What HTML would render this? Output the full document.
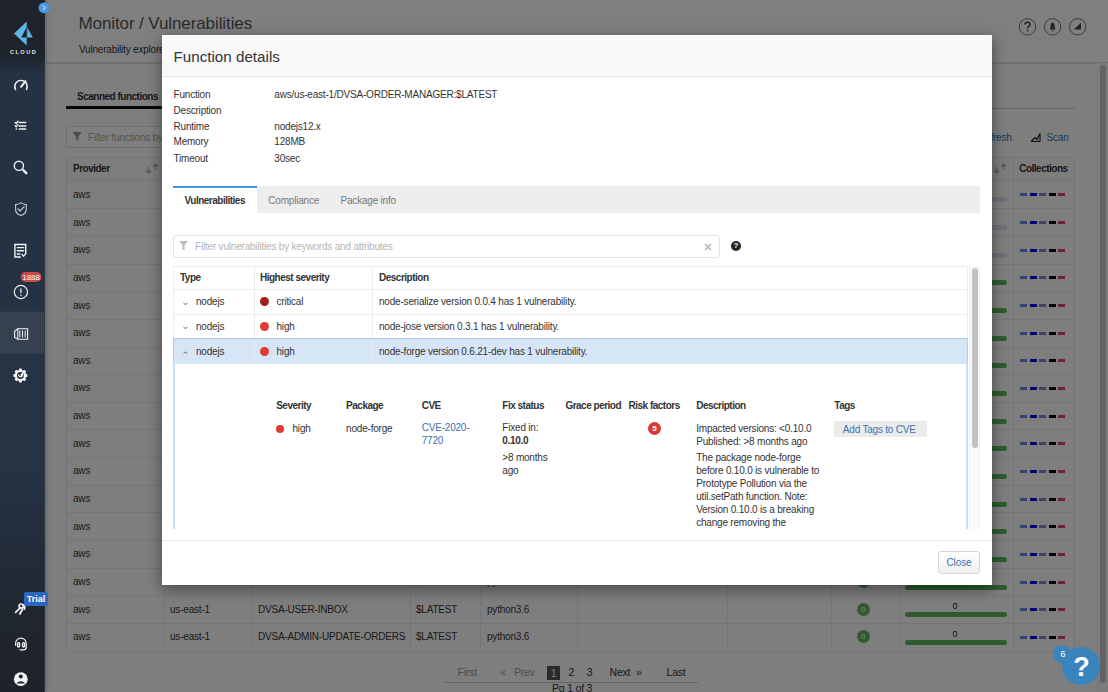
<!DOCTYPE html>
<html><head><meta charset="utf-8">
<style>
*{box-sizing:border-box;margin:0;padding:0}
html,body{width:1108px;height:692px;overflow:hidden;background:#fff}
body{font-family:"Liberation Sans",sans-serif;font-size:10px;color:#333;position:relative;letter-spacing:-0.2px}
.a{position:absolute;white-space:nowrap}
#side{position:absolute;left:0;top:0;width:45px;height:692px;background:linear-gradient(#1f232b 0,#1f232b 54px,#243243 74px,#253345 470px,#20262f 620px,#1e222a 692px);z-index:5;box-shadow:1px 0 4px rgba(0,0,0,.25)}
#page{position:absolute;left:0;top:0;width:1108px;height:692px;background:#fcfcfc}
#overlay{position:absolute;left:45px;top:0;width:1063px;height:692px;background:rgba(0,0,0,.5);z-index:2}
#modal{position:absolute;left:162px;top:35px;width:830px;height:550px;background:#fff;z-index:3;box-shadow:0 4px 14px rgba(0,0,0,.45)}
</style></head><body>
<div id="side">
<svg class="a" style="left:0;top:0;overflow:visible" width="45" height="692" viewBox="0 0 45 692">
<rect x="0" y="311.5" width="44.5" height="42" fill="#36414f"/>
<rect x="44" y="62" width="1" height="630" fill="#2e3a4b" opacity=".6"/>
<g fill="#5db7e3"><path d="M26.7 21.6L14 33.5L26.7 45.4Z"/><path d="M27.2 27.3L32.8 37.4H27.2Z"/></g>
<path d="M26.7 27.3L21.2 37.4H26.7Z" fill="#1f232b"/>
<text x="23.6" y="54.2" font-family="Liberation Sans" font-weight="bold" font-size="5.6" letter-spacing="1.5" fill="#e6e6e6" text-anchor="middle">CLOUD</text>
<g fill="none" stroke="#f2f2f2" stroke-width="1.4" stroke-linecap="round">
<path d="M15.6 89.6A6.2 6.2 0 1 1 26.4 89.6"/>
<path d="M21 86.8L25.6 81.2" stroke-width="2"/>
<path d="M15.2 122.4L16.2 123.4L18 121.2M15.2 125.8L16.2 126.8L18 124.6"/>
<path d="M19.3 122.6H25.7M19.3 125.9H25.7M19.3 129.1H25.7M16.2 129.1H16.5" stroke-width="1.5"/>
<circle cx="18.9" cy="165.8" r="4.6"/>
<path d="M23.2 170.1L26.3 173.2" stroke-width="2.4"/>
<path d="M20.9 202.6C19.2 204 17.5 204.6 15.6 204.6V209.5C15.6 212.4 18 214.6 20.9 215.6C23.8 214.6 26.2 212.4 26.2 209.5V204.6C24.3 204.6 22.6 204 20.9 202.6Z" stroke="#c9ced6" stroke-width="1.1"/>
<path d="M18 209L20 211L24 206.8" stroke="#c9ced6" stroke-width="1.2"/>
<path d="M20.4 257H14.9V244.5H25.7V252.2"/>
<path d="M17.2 247.6H23.6M17.2 250.7H23.6M17.2 254H19.9"/>
<path d="M22.2 254.6L23.6 256.2L26 253.2"/>
<circle cx="20.9" cy="292" r="6.6" stroke-width="1.2"/>
<path d="M20.9 289V292.6" stroke-width="1.3"/>
<path d="M14.6 331.2L17.8 328.8H27.6V339.2H17.8L14.6 337.2Z" stroke-width="1.1"/>
<path d="M17.8 328.8V339.2M19.8 331V337M22.5 331V337M25.2 331V337" stroke-width="1"/>
<path d="M15.6 612.4L20 608.2M19.8 614L22.6 609.2" stroke-width="1.8"/>
<circle cx="21.2" cy="606.1" r="2.1" stroke-width="1.7"/><path d="M23 604.8Q25.6 606.4 24.4 609.2" stroke-width="1.7"/>
<path d="M15.6 645.2V643.4A5.2 5.2 0 0 1 26.2 643.4V647.8Q26.2 649.8 23.4 649.8H20" stroke-width="1.2"/>
<rect x="17.6" y="642.6" width="2" height="4.4" rx="1" stroke-width="1.4"/>
<rect x="22.6" y="642.6" width="2" height="4.4" rx="1" stroke-width="1.4"/>
</g>
<circle cx="20.9" cy="295.2" r="0.8" fill="#f2f2f2"/>
<g fill="#f8f8f8"><rect x="19" y="368.6" width="2.8" height="2.6" rx="0.4" transform="rotate(0 20.4 375.5)"/><rect x="19" y="368.6" width="2.8" height="2.6" rx="0.4" transform="rotate(45 20.4 375.5)"/><rect x="19" y="368.6" width="2.8" height="2.6" rx="0.4" transform="rotate(90 20.4 375.5)"/><rect x="19" y="368.6" width="2.8" height="2.6" rx="0.4" transform="rotate(135 20.4 375.5)"/><rect x="19" y="368.6" width="2.8" height="2.6" rx="0.4" transform="rotate(180 20.4 375.5)"/><rect x="19" y="368.6" width="2.8" height="2.6" rx="0.4" transform="rotate(225 20.4 375.5)"/><rect x="19" y="368.6" width="2.8" height="2.6" rx="0.4" transform="rotate(270 20.4 375.5)"/><rect x="19" y="368.6" width="2.8" height="2.6" rx="0.4" transform="rotate(315 20.4 375.5)"/><circle cx="20.4" cy="375.5" r="5.7"/></g>
<circle cx="20.4" cy="375.5" r="3.5" fill="#243243"/>
<path d="M18.5 374.6A2.1 2.1 0 1 0 22.3 373.4" stroke="#f8f8f8" stroke-width="1.2" fill="none"/>
<path d="M20.6 375.6L22.6 373.2" stroke="#f8f8f8" stroke-width="1.3"/>
<circle cx="20.8" cy="679.2" r="6.9" fill="#f4f4f4"/>
<circle cx="20.8" cy="676.6" r="2" fill="#1f242c"/>
<path d="M16.2 683.4Q20.8 679 25.4 683.4Z" fill="#1f242c"/>
<circle cx="43.9" cy="7.8" r="5.4" fill="#4a97e6"/>
<path d="M42.9 5.3L45.2 7.8L42.9 10.3" stroke="#fff" stroke-width="0.9" fill="none"/>
<rect x="20.7" y="272.1" width="20.8" height="9.8" rx="4.9" fill="#c94a47"/>
<text x="31.1" y="280.1" font-family="Liberation Sans" font-size="8" fill="#fff" text-anchor="middle" letter-spacing="0">1888</text>
</svg>

<div class="a" style="left:23.9px;top:592.2px;width:24.4px;height:14px;border-radius:2px;background:#2a67bf;color:#fff;font-weight:bold;font-size:9px;line-height:14px;text-align:center;letter-spacing:0">Trial</div>
</div>
<div id="page">
<div class="a" style="left:45px;top:0;width:1063px;height:64px;background:#fff;border-bottom:2px solid #e0e0e0"></div>
<div class="a" style="left:78.5px;top:13px;font-size:17px;letter-spacing:-0.1px;color:#555;line-height:22px">Monitor / Vulnerabilities</div>
<div class="a" style="left:79px;top:43.0px;font-size:10px;color:#333;line-height:13px">Vulnerability explorer</div>
<div class="a" style="left:66px;top:108px;width:1009px;height:1px;background:#ccc"></div>
<div class="a" style="left:66px;top:106px;width:100px;height:3px;background:#111"></div>
<div class="a" style="left:77px;top:89.9px;font-weight:bold;letter-spacing:-0.5px;color:#333;line-height:13px">Scanned functions</div>
<div class="a" style="left:66px;top:126px;width:500px;height:22px;border:1px solid #ddd;background:#fff;border-radius:2px"></div>
<div class="a" style="left:88px;top:130.5px;color:#aaa;line-height:13px">Filter functions by keywords and attributes</div>
<div class="a" style="left:978px;top:130.8px;color:#3a73b0;line-height:13px">Refresh</div>
<div class="a" style="left:1046.6px;top:130.8px;color:#3a73b0;line-height:13px">Scan</div>
<div class="a" style="left:66px;top:157px;width:1009px;height:494.7px;background:#fdfdfd;border:1px solid #eaeaea"></div>
<div class="a" style="left:66px;top:157px;width:1009px;height:24px;background:#fbfbfb;border:1px solid #eaeaea"></div>
<div class="a" style="left:164px;top:157px;width:1px;height:494.7px;background:#eaeaea"></div>
<div class="a" style="left:252px;top:157px;width:1px;height:494.7px;background:#eaeaea"></div>
<div class="a" style="left:410px;top:157px;width:1px;height:494.7px;background:#eaeaea"></div>
<div class="a" style="left:480px;top:157px;width:1px;height:494.7px;background:#eaeaea"></div>
<div class="a" style="left:577px;top:157px;width:1px;height:494.7px;background:#eaeaea"></div>
<div class="a" style="left:727px;top:157px;width:1px;height:494.7px;background:#eaeaea"></div>
<div class="a" style="left:831px;top:157px;width:1px;height:494.7px;background:#eaeaea"></div>
<div class="a" style="left:899px;top:157px;width:1px;height:494.7px;background:#eaeaea"></div>
<div class="a" style="left:1013px;top:157px;width:1px;height:494.7px;background:#eaeaea"></div>
<div class="a" style="left:66px;top:208.2px;width:1009px;height:1px;background:#eaeaea"></div>
<div class="a" style="left:66px;top:235.8px;width:1009px;height:1px;background:#eaeaea"></div>
<div class="a" style="left:66px;top:263.5px;width:1009px;height:1px;background:#eaeaea"></div>
<div class="a" style="left:66px;top:291.1px;width:1009px;height:1px;background:#eaeaea"></div>
<div class="a" style="left:66px;top:318.8px;width:1009px;height:1px;background:#eaeaea"></div>
<div class="a" style="left:66px;top:346.5px;width:1009px;height:1px;background:#eaeaea"></div>
<div class="a" style="left:66px;top:374.1px;width:1009px;height:1px;background:#eaeaea"></div>
<div class="a" style="left:66px;top:401.8px;width:1009px;height:1px;background:#eaeaea"></div>
<div class="a" style="left:66px;top:429.4px;width:1009px;height:1px;background:#eaeaea"></div>
<div class="a" style="left:66px;top:457.1px;width:1009px;height:1px;background:#eaeaea"></div>
<div class="a" style="left:66px;top:484.8px;width:1009px;height:1px;background:#eaeaea"></div>
<div class="a" style="left:66px;top:512.4px;width:1009px;height:1px;background:#eaeaea"></div>
<div class="a" style="left:66px;top:540.1px;width:1009px;height:1px;background:#eaeaea"></div>
<div class="a" style="left:66px;top:567.7px;width:1009px;height:1px;background:#eaeaea"></div>
<div class="a" style="left:66px;top:595.4px;width:1009px;height:1px;background:#eaeaea"></div>
<div class="a" style="left:66px;top:623.1px;width:1009px;height:1px;background:#eaeaea"></div>
<div class="a" style="left:66px;top:650.7px;width:1009px;height:1px;background:#eaeaea"></div>
<div class="a" style="left:73px;top:162.0px;font-weight:bold;letter-spacing:-0.5px;color:#333;line-height:13px">Provider</div>
<div class="a" style="left:1019.2px;top:162.4px;font-weight:bold;letter-spacing:-0.5px;color:#333;line-height:13px">Collections</div>
<div class="a" style="left:73px;top:187.8px;line-height:13px">aws</div>
<div class="a" style="left:856.5px;top:187.8px;width:13px;height:13px;border-radius:50%;background:#5cb85c;color:#fff;font-size:8px;line-height:13px;text-align:center">0</div>
<div class="a" style="left:905px;top:197.3px;width:102px;height:5px;border-radius:3px;background:#dde3ee"></div>
<div class="a" style="left:1020.0px;top:193.3px;width:7px;height:3px;background:#5b8fd0"></div>
<div class="a" style="left:1029.5px;top:193.3px;width:7px;height:3px;background:#0000ee"></div>
<div class="a" style="left:1039.0px;top:193.3px;width:7px;height:3px;background:#7f7fe0"></div>
<div class="a" style="left:1048.5px;top:193.3px;width:7px;height:3px;background:#000"></div>
<div class="a" style="left:1058.0px;top:193.3px;width:7px;height:3px;background:#e0408f"></div>
<div class="a" style="left:73px;top:215.5px;line-height:13px">aws</div>
<div class="a" style="left:856.5px;top:215.5px;width:13px;height:13px;border-radius:50%;background:#5cb85c;color:#fff;font-size:8px;line-height:13px;text-align:center">0</div>
<div class="a" style="left:905px;top:225.0px;width:102px;height:5px;border-radius:3px;background:#dde3ee"></div>
<div class="a" style="left:1020.0px;top:221.0px;width:7px;height:3px;background:#5b8fd0"></div>
<div class="a" style="left:1029.5px;top:221.0px;width:7px;height:3px;background:#0000ee"></div>
<div class="a" style="left:1039.0px;top:221.0px;width:7px;height:3px;background:#7f7fe0"></div>
<div class="a" style="left:1048.5px;top:221.0px;width:7px;height:3px;background:#000"></div>
<div class="a" style="left:1058.0px;top:221.0px;width:7px;height:3px;background:#e0408f"></div>
<div class="a" style="left:73px;top:243.2px;line-height:13px">aws</div>
<div class="a" style="left:856.5px;top:243.2px;width:13px;height:13px;border-radius:50%;background:#5cb85c;color:#fff;font-size:8px;line-height:13px;text-align:center">0</div>
<div class="a" style="left:905px;top:252.7px;width:102px;height:5px;border-radius:3px;background:#dde3ee"></div>
<div class="a" style="left:1020.0px;top:248.7px;width:7px;height:3px;background:#5b8fd0"></div>
<div class="a" style="left:1029.5px;top:248.7px;width:7px;height:3px;background:#0000ee"></div>
<div class="a" style="left:1039.0px;top:248.7px;width:7px;height:3px;background:#7f7fe0"></div>
<div class="a" style="left:1048.5px;top:248.7px;width:7px;height:3px;background:#000"></div>
<div class="a" style="left:1058.0px;top:248.7px;width:7px;height:3px;background:#e0408f"></div>
<div class="a" style="left:73px;top:270.8px;line-height:13px">aws</div>
<div class="a" style="left:856.5px;top:270.8px;width:13px;height:13px;border-radius:50%;background:#5cb85c;color:#fff;font-size:8px;line-height:13px;text-align:center">0</div>
<div class="a" style="left:952.5px;top:269.3px;font-size:9px;line-height:10px;color:#222">0</div>
<div class="a" style="left:905px;top:280.3px;width:102px;height:5px;border-radius:3px;background:#5cb85c"></div>
<div class="a" style="left:1020.0px;top:276.3px;width:7px;height:3px;background:#5b8fd0"></div>
<div class="a" style="left:1029.5px;top:276.3px;width:7px;height:3px;background:#0000ee"></div>
<div class="a" style="left:1039.0px;top:276.3px;width:7px;height:3px;background:#7f7fe0"></div>
<div class="a" style="left:1048.5px;top:276.3px;width:7px;height:3px;background:#000"></div>
<div class="a" style="left:1058.0px;top:276.3px;width:7px;height:3px;background:#e0408f"></div>
<div class="a" style="left:73px;top:298.5px;line-height:13px">aws</div>
<div class="a" style="left:856.5px;top:298.5px;width:13px;height:13px;border-radius:50%;background:#5cb85c;color:#fff;font-size:8px;line-height:13px;text-align:center">0</div>
<div class="a" style="left:952.5px;top:297.0px;font-size:9px;line-height:10px;color:#222">0</div>
<div class="a" style="left:905px;top:308.0px;width:102px;height:5px;border-radius:3px;background:#5cb85c"></div>
<div class="a" style="left:1020.0px;top:304.0px;width:7px;height:3px;background:#5b8fd0"></div>
<div class="a" style="left:1029.5px;top:304.0px;width:7px;height:3px;background:#0000ee"></div>
<div class="a" style="left:1039.0px;top:304.0px;width:7px;height:3px;background:#7f7fe0"></div>
<div class="a" style="left:1048.5px;top:304.0px;width:7px;height:3px;background:#000"></div>
<div class="a" style="left:1058.0px;top:304.0px;width:7px;height:3px;background:#e0408f"></div>
<div class="a" style="left:73px;top:326.1px;line-height:13px">aws</div>
<div class="a" style="left:856.5px;top:326.1px;width:13px;height:13px;border-radius:50%;background:#5cb85c;color:#fff;font-size:8px;line-height:13px;text-align:center">0</div>
<div class="a" style="left:952.5px;top:324.6px;font-size:9px;line-height:10px;color:#222">0</div>
<div class="a" style="left:905px;top:335.6px;width:102px;height:5px;border-radius:3px;background:#5cb85c"></div>
<div class="a" style="left:1020.0px;top:331.6px;width:7px;height:3px;background:#5b8fd0"></div>
<div class="a" style="left:1029.5px;top:331.6px;width:7px;height:3px;background:#0000ee"></div>
<div class="a" style="left:1039.0px;top:331.6px;width:7px;height:3px;background:#7f7fe0"></div>
<div class="a" style="left:1048.5px;top:331.6px;width:7px;height:3px;background:#000"></div>
<div class="a" style="left:1058.0px;top:331.6px;width:7px;height:3px;background:#e0408f"></div>
<div class="a" style="left:73px;top:353.8px;line-height:13px">aws</div>
<div class="a" style="left:856.5px;top:353.8px;width:13px;height:13px;border-radius:50%;background:#5cb85c;color:#fff;font-size:8px;line-height:13px;text-align:center">0</div>
<div class="a" style="left:952.5px;top:352.3px;font-size:9px;line-height:10px;color:#222">0</div>
<div class="a" style="left:905px;top:363.3px;width:102px;height:5px;border-radius:3px;background:#5cb85c"></div>
<div class="a" style="left:1020.0px;top:359.3px;width:7px;height:3px;background:#5b8fd0"></div>
<div class="a" style="left:1029.5px;top:359.3px;width:7px;height:3px;background:#0000ee"></div>
<div class="a" style="left:1039.0px;top:359.3px;width:7px;height:3px;background:#7f7fe0"></div>
<div class="a" style="left:1048.5px;top:359.3px;width:7px;height:3px;background:#000"></div>
<div class="a" style="left:1058.0px;top:359.3px;width:7px;height:3px;background:#e0408f"></div>
<div class="a" style="left:73px;top:381.4px;line-height:13px">aws</div>
<div class="a" style="left:856.5px;top:381.4px;width:13px;height:13px;border-radius:50%;background:#5cb85c;color:#fff;font-size:8px;line-height:13px;text-align:center">0</div>
<div class="a" style="left:952.5px;top:379.9px;font-size:9px;line-height:10px;color:#222">0</div>
<div class="a" style="left:905px;top:390.9px;width:102px;height:5px;border-radius:3px;background:#5cb85c"></div>
<div class="a" style="left:1020.0px;top:386.9px;width:7px;height:3px;background:#5b8fd0"></div>
<div class="a" style="left:1029.5px;top:386.9px;width:7px;height:3px;background:#0000ee"></div>
<div class="a" style="left:1039.0px;top:386.9px;width:7px;height:3px;background:#7f7fe0"></div>
<div class="a" style="left:1048.5px;top:386.9px;width:7px;height:3px;background:#000"></div>
<div class="a" style="left:1058.0px;top:386.9px;width:7px;height:3px;background:#e0408f"></div>
<div class="a" style="left:73px;top:409.1px;line-height:13px">aws</div>
<div class="a" style="left:856.5px;top:409.1px;width:13px;height:13px;border-radius:50%;background:#5cb85c;color:#fff;font-size:8px;line-height:13px;text-align:center">0</div>
<div class="a" style="left:952.5px;top:407.6px;font-size:9px;line-height:10px;color:#222">0</div>
<div class="a" style="left:905px;top:418.6px;width:102px;height:5px;border-radius:3px;background:#5cb85c"></div>
<div class="a" style="left:1020.0px;top:414.6px;width:7px;height:3px;background:#5b8fd0"></div>
<div class="a" style="left:1029.5px;top:414.6px;width:7px;height:3px;background:#0000ee"></div>
<div class="a" style="left:1039.0px;top:414.6px;width:7px;height:3px;background:#7f7fe0"></div>
<div class="a" style="left:1048.5px;top:414.6px;width:7px;height:3px;background:#000"></div>
<div class="a" style="left:1058.0px;top:414.6px;width:7px;height:3px;background:#e0408f"></div>
<div class="a" style="left:73px;top:436.8px;line-height:13px">aws</div>
<div class="a" style="left:856.5px;top:436.8px;width:13px;height:13px;border-radius:50%;background:#5cb85c;color:#fff;font-size:8px;line-height:13px;text-align:center">0</div>
<div class="a" style="left:952.5px;top:435.3px;font-size:9px;line-height:10px;color:#222">0</div>
<div class="a" style="left:905px;top:446.3px;width:102px;height:5px;border-radius:3px;background:#5cb85c"></div>
<div class="a" style="left:1020.0px;top:442.3px;width:7px;height:3px;background:#5b8fd0"></div>
<div class="a" style="left:1029.5px;top:442.3px;width:7px;height:3px;background:#0000ee"></div>
<div class="a" style="left:1039.0px;top:442.3px;width:7px;height:3px;background:#7f7fe0"></div>
<div class="a" style="left:1048.5px;top:442.3px;width:7px;height:3px;background:#000"></div>
<div class="a" style="left:1058.0px;top:442.3px;width:7px;height:3px;background:#e0408f"></div>
<div class="a" style="left:73px;top:464.4px;line-height:13px">aws</div>
<div class="a" style="left:856.5px;top:464.4px;width:13px;height:13px;border-radius:50%;background:#5cb85c;color:#fff;font-size:8px;line-height:13px;text-align:center">0</div>
<div class="a" style="left:952.5px;top:462.9px;font-size:9px;line-height:10px;color:#222">0</div>
<div class="a" style="left:905px;top:473.9px;width:102px;height:5px;border-radius:3px;background:#5cb85c"></div>
<div class="a" style="left:1020.0px;top:469.9px;width:7px;height:3px;background:#5b8fd0"></div>
<div class="a" style="left:1029.5px;top:469.9px;width:7px;height:3px;background:#0000ee"></div>
<div class="a" style="left:1039.0px;top:469.9px;width:7px;height:3px;background:#7f7fe0"></div>
<div class="a" style="left:1048.5px;top:469.9px;width:7px;height:3px;background:#000"></div>
<div class="a" style="left:1058.0px;top:469.9px;width:7px;height:3px;background:#e0408f"></div>
<div class="a" style="left:73px;top:492.1px;line-height:13px">aws</div>
<div class="a" style="left:856.5px;top:492.1px;width:13px;height:13px;border-radius:50%;background:#5cb85c;color:#fff;font-size:8px;line-height:13px;text-align:center">0</div>
<div class="a" style="left:952.5px;top:490.6px;font-size:9px;line-height:10px;color:#222">0</div>
<div class="a" style="left:905px;top:501.6px;width:102px;height:5px;border-radius:3px;background:#5cb85c"></div>
<div class="a" style="left:1020.0px;top:497.6px;width:7px;height:3px;background:#5b8fd0"></div>
<div class="a" style="left:1029.5px;top:497.6px;width:7px;height:3px;background:#0000ee"></div>
<div class="a" style="left:1039.0px;top:497.6px;width:7px;height:3px;background:#7f7fe0"></div>
<div class="a" style="left:1048.5px;top:497.6px;width:7px;height:3px;background:#000"></div>
<div class="a" style="left:1058.0px;top:497.6px;width:7px;height:3px;background:#e0408f"></div>
<div class="a" style="left:73px;top:519.8px;line-height:13px">aws</div>
<div class="a" style="left:856.5px;top:519.8px;width:13px;height:13px;border-radius:50%;background:#5cb85c;color:#fff;font-size:8px;line-height:13px;text-align:center">0</div>
<div class="a" style="left:952.5px;top:518.3px;font-size:9px;line-height:10px;color:#222">0</div>
<div class="a" style="left:905px;top:529.3px;width:102px;height:5px;border-radius:3px;background:#5cb85c"></div>
<div class="a" style="left:1020.0px;top:525.3px;width:7px;height:3px;background:#5b8fd0"></div>
<div class="a" style="left:1029.5px;top:525.3px;width:7px;height:3px;background:#0000ee"></div>
<div class="a" style="left:1039.0px;top:525.3px;width:7px;height:3px;background:#7f7fe0"></div>
<div class="a" style="left:1048.5px;top:525.3px;width:7px;height:3px;background:#000"></div>
<div class="a" style="left:1058.0px;top:525.3px;width:7px;height:3px;background:#e0408f"></div>
<div class="a" style="left:73px;top:547.4px;line-height:13px">aws</div>
<div class="a" style="left:856.5px;top:547.4px;width:13px;height:13px;border-radius:50%;background:#5cb85c;color:#fff;font-size:8px;line-height:13px;text-align:center">0</div>
<div class="a" style="left:952.5px;top:545.9px;font-size:9px;line-height:10px;color:#222">0</div>
<div class="a" style="left:905px;top:556.9px;width:102px;height:5px;border-radius:3px;background:#5cb85c"></div>
<div class="a" style="left:1020.0px;top:552.9px;width:7px;height:3px;background:#5b8fd0"></div>
<div class="a" style="left:1029.5px;top:552.9px;width:7px;height:3px;background:#0000ee"></div>
<div class="a" style="left:1039.0px;top:552.9px;width:7px;height:3px;background:#7f7fe0"></div>
<div class="a" style="left:1048.5px;top:552.9px;width:7px;height:3px;background:#000"></div>
<div class="a" style="left:1058.0px;top:552.9px;width:7px;height:3px;background:#e0408f"></div>
<div class="a" style="left:73px;top:575.1px;line-height:13px">aws</div>
<div class="a" style="left:170px;top:575.1px;line-height:13px">us-east-1</div>
<div class="a" style="left:258px;top:575.1px;line-height:13px">DVSA-ORDER-GET</div>
<div class="a" style="left:416px;top:575.1px;line-height:13px">$LATEST</div>
<div class="a" style="left:487px;top:575.1px;line-height:13px">python3.6</div>
<div class="a" style="left:856.5px;top:575.1px;width:13px;height:13px;border-radius:50%;background:#5cb85c;color:#fff;font-size:8px;line-height:13px;text-align:center">0</div>
<div class="a" style="left:952.5px;top:573.6px;font-size:9px;line-height:10px;color:#222">0</div>
<div class="a" style="left:905px;top:584.6px;width:102px;height:5px;border-radius:3px;background:#5cb85c"></div>
<div class="a" style="left:1020.0px;top:580.6px;width:7px;height:3px;background:#5b8fd0"></div>
<div class="a" style="left:1029.5px;top:580.6px;width:7px;height:3px;background:#0000ee"></div>
<div class="a" style="left:1039.0px;top:580.6px;width:7px;height:3px;background:#7f7fe0"></div>
<div class="a" style="left:1048.5px;top:580.6px;width:7px;height:3px;background:#000"></div>
<div class="a" style="left:1058.0px;top:580.6px;width:7px;height:3px;background:#e0408f"></div>
<div class="a" style="left:73px;top:602.7px;line-height:13px">aws</div>
<div class="a" style="left:170px;top:602.7px;line-height:13px">us-east-1</div>
<div class="a" style="left:258px;top:602.7px;line-height:13px">DVSA-USER-INBOX</div>
<div class="a" style="left:416px;top:602.7px;line-height:13px">$LATEST</div>
<div class="a" style="left:487px;top:602.7px;line-height:13px">python3.6</div>
<div class="a" style="left:856.5px;top:602.7px;width:13px;height:13px;border-radius:50%;background:#5cb85c;color:#fff;font-size:8px;line-height:13px;text-align:center">0</div>
<div class="a" style="left:952.5px;top:601.2px;font-size:9px;line-height:10px;color:#222">0</div>
<div class="a" style="left:905px;top:612.2px;width:102px;height:5px;border-radius:3px;background:#5cb85c"></div>
<div class="a" style="left:1020.0px;top:608.2px;width:7px;height:3px;background:#5b8fd0"></div>
<div class="a" style="left:1029.5px;top:608.2px;width:7px;height:3px;background:#0000ee"></div>
<div class="a" style="left:1039.0px;top:608.2px;width:7px;height:3px;background:#7f7fe0"></div>
<div class="a" style="left:1048.5px;top:608.2px;width:7px;height:3px;background:#000"></div>
<div class="a" style="left:1058.0px;top:608.2px;width:7px;height:3px;background:#e0408f"></div>
<div class="a" style="left:73px;top:630.4px;line-height:13px">aws</div>
<div class="a" style="left:170px;top:630.4px;line-height:13px">us-east-1</div>
<div class="a" style="left:258px;top:630.4px;line-height:13px">DVSA-ADMIN-UPDATE-ORDERS</div>
<div class="a" style="left:416px;top:630.4px;line-height:13px">$LATEST</div>
<div class="a" style="left:487px;top:630.4px;line-height:13px">python3.6</div>
<div class="a" style="left:856.5px;top:630.4px;width:13px;height:13px;border-radius:50%;background:#5cb85c;color:#fff;font-size:8px;line-height:13px;text-align:center">0</div>
<div class="a" style="left:952.5px;top:628.9px;font-size:9px;line-height:10px;color:#222">0</div>
<div class="a" style="left:905px;top:639.9px;width:102px;height:5px;border-radius:3px;background:#5cb85c"></div>
<div class="a" style="left:1020.0px;top:635.9px;width:7px;height:3px;background:#5b8fd0"></div>
<div class="a" style="left:1029.5px;top:635.9px;width:7px;height:3px;background:#0000ee"></div>
<div class="a" style="left:1039.0px;top:635.9px;width:7px;height:3px;background:#7f7fe0"></div>
<div class="a" style="left:1048.5px;top:635.9px;width:7px;height:3px;background:#000"></div>
<div class="a" style="left:1058.0px;top:635.9px;width:7px;height:3px;background:#e0408f"></div>
<div class="a" style="left:457.6px;top:666.1px;color:#999;line-height:13px;font-size:10.5px">First</div>
<div class="a" style="left:500px;top:666.1px;color:#999;line-height:13px;font-size:10.5px">«</div>
<div class="a" style="left:514px;top:666.1px;color:#999;line-height:13px;font-size:10.5px">Prev</div>
<div class="a" style="left:568.6px;top:666.1px;color:#333;line-height:13px;font-size:10.5px">2</div>
<div class="a" style="left:586.7px;top:666.1px;color:#333;line-height:13px;font-size:10.5px">3</div>
<div class="a" style="left:609.5px;top:666.1px;color:#333;line-height:13px;font-size:10.5px">Next</div>
<div class="a" style="left:636px;top:666.1px;color:#333;line-height:13px;font-size:10.5px">»</div>
<div class="a" style="left:666.5px;top:666.1px;color:#333;line-height:13px;font-size:10.5px">Last</div>
<div class="a" style="left:546.8px;top:665.6px;width:13.4px;height:14px;background:#555;color:#fff;text-align:center;line-height:14px;font-size:10.5px">1</div>
<div class="a" style="left:444px;top:681.5px;width:254px;height:1px;background:#ccc"></div>
<div class="a" style="left:552px;top:682.0px;line-height:13px;font-size:10.5px">Pg 1 of 3</div>
<svg class="a" style="left:0;top:0" width="1108" height="692" viewBox="0 0 1108 692">
<g fill="none" stroke="#777" stroke-width="1">
<circle cx="1027.5" cy="26.8" r="8.2"/><circle cx="1052.6" cy="26.8" r="8.2"/><circle cx="1077.6" cy="26.8" r="8.2"/>
</g>
<path d="M1025 24.6Q1025 22.2 1027.5 22.2Q1030 22.2 1030 24.4Q1030 25.8 1028.4 26.6Q1027.6 27 1027.6 28.4" fill="none" stroke="#444" stroke-width="1.5"/>
<circle cx="1027.6" cy="30.6" r="0.9" fill="#444"/>
<path d="M1049.4 29.4Q1050.6 28.4 1050.6 26.2Q1050.6 23 1052.6 22.6Q1054.6 23 1054.6 26.2Q1054.6 28.4 1055.8 29.4Z" fill="#444"/>
<rect x="1051.8" y="30.4" width="1.6" height="1" fill="#444"/>
<path d="M1073.8 29.6L1081 22.8V29.6Z" fill="#444"/>
<path d="M72.6 132H81.7L78.4 136.4V140.8L75.9 139.2V136.4Z" fill="#999"/>
<path d="M148.5 167V173M146.0 170.5L148.5 173L151.0 170.5M155.5 170V164M153.0 166.5L155.5 164L158.0 166.5" fill="none" stroke="#aaa" stroke-width="1.2"/>
<path d="M996.5 167V173M994.0 170.5L996.5 173L999.0 170.5M1003.5 170V164M1001.0 166.5L1003.5 164L1006.0 166.5" fill="none" stroke="#aaa" stroke-width="1.2"/>
<path d="M1031 141.5H1040.5M1031.5 141L1035 137.5L1037 139.5L1040 133.5V141" fill="none" stroke="#111" stroke-width="1.1"/>
</svg>
<div class="a" style="left:1096.5px;top:63px;width:11.5px;height:629px;background:#f8f8f8;border-left:1px solid #eee"></div>
<div class="a" style="left:1099.5px;top:64.5px;width:6.3px;height:618px;border-radius:3px;background:#c4c4c4"></div>
</div>
<div id="overlay"></div>
<div id="modal">
<div class="a" style="left:0.0px;top:0.0px;width:830px;height:42px;background:#f9f9f9;border-bottom:1px solid #e6e6e6"></div>
<div class="a" style="left:11.5px;top:12.0px;font-size:15.2px;letter-spacing:0;line-height:20px;color:#333">Function details</div>
<div class="a" style="left:11.5px;top:52.8px;line-height:13px;color:#333">Function</div>
<div class="a" style="left:112.3px;top:52.8px;line-height:13px;color:#333">aws/us-east-1/DVSA-ORDER-MANAGER:$LATEST</div>
<div class="a" style="left:11.5px;top:69.0px;line-height:13px;color:#333">Description</div>
<div class="a" style="left:11.5px;top:85.3px;line-height:13px;color:#333">Runtime</div>
<div class="a" style="left:112.3px;top:85.3px;line-height:13px;color:#333">nodejs12.x</div>
<div class="a" style="left:11.5px;top:100.2px;line-height:13px;color:#333">Memory</div>
<div class="a" style="left:112.3px;top:100.2px;line-height:13px;color:#333">128MB</div>
<div class="a" style="left:11.5px;top:116.5px;line-height:13px;color:#333">Timeout</div>
<div class="a" style="left:112.3px;top:116.5px;line-height:13px;color:#333">30sec</div>
<div class="a" style="left:11.0px;top:151.0px;width:807px;height:27px;background:#eeeeee"></div>
<div class="a" style="left:11.0px;top:151.0px;width:84px;height:27px;background:#fff;border-top:2px solid #4a90e2"></div>
<div class="a" style="left:22.5px;top:158.5px;line-height:13px;font-weight:bold;letter-spacing:-0.5px;color:#333;">Vulnerabilities</div>
<div class="a" style="left:106.3px;top:158.5px;line-height:13px;color:#777">Compliance</div>
<div class="a" style="left:178.5px;top:158.5px;line-height:13px;color:#777">Package info</div>
<div class="a" style="left:11.0px;top:200.0px;width:546.7px;height:23px;border:1px solid #e2e2e2;border-radius:3px;background:#fff"></div>
<div class="a" style="left:33.0px;top:205.0px;line-height:13px;color:#b5b5b5">Filter vulnerabilities by keywords and attributes</div>
<svg class="a" style="left:17px;top:206px" width="9" height="10" viewBox="0 0 9 10"><path d="M0 0H9L5.6 4.2V9.6L3.4 8V4.2Z" fill="#bdbdbd"/></svg>
<svg class="a" style="left:542px;top:208px" width="8" height="8" viewBox="0 0 8 8"><path d="M1 1L7 7M7 1L1 7" stroke="#c4c4c4" stroke-width="1.8"/></svg>
<div class="a" style="left:569.0px;top:206.0px;width:10px;height:10px;border-radius:50%;background:#222;color:#fff;font-size:8px;font-weight:bold;line-height:10px;text-align:center;letter-spacing:0">?</div>
<div class="a" style="left:11.0px;top:231.0px;width:795px;height:263px;border:1px solid #ececec;border-bottom:none;background:#fff"></div>
<div class="a" style="left:11.0px;top:231.0px;width:795px;height:24px;border:1px solid #ececec"></div>
<div class="a" style="left:11.0px;top:279.0px;width:795px;height:1px;background:#ececec"></div>
<div class="a" style="left:92.0px;top:231.0px;width:1px;height:72px;background:#ececec"></div>
<div class="a" style="left:210.0px;top:231.0px;width:1px;height:72px;background:#ececec"></div>
<div class="a" style="left:18.0px;top:236.0px;line-height:13px;font-weight:bold;letter-spacing:-0.5px;color:#333;">Type</div>
<div class="a" style="left:98.0px;top:236.0px;line-height:13px;font-weight:bold;letter-spacing:-0.5px;color:#333;">Highest severity</div>
<div class="a" style="left:217.0px;top:236.0px;line-height:13px;font-weight:bold;letter-spacing:-0.5px;color:#333;">Description</div>
<div class="a" style="left:11.0px;top:303.0px;width:795px;height:26px;background:#d7e6f7;border:1px solid #a9cdf2;border-bottom:none"></div>
<div class="a" style="left:92.0px;top:304.0px;width:1px;height:24px;background:#e6eef8"></div>
<div class="a" style="left:210.0px;top:304.0px;width:1px;height:24px;background:#e6eef8"></div>
<div class="a" style="left:11.0px;top:328.0px;width:2px;height:166px;background:#c6def7"></div>
<div class="a" style="left:804.0px;top:328.0px;width:2px;height:166px;background:#c6def7"></div>
<div class="a" style="left:34.0px;top:260.2px;line-height:13px;color:#333">nodejs</div>
<div class="a" style="left:98.0px;top:262.2px;width:9px;height:9px;border-radius:50%;background:#a02020"></div>
<div class="a" style="left:114.5px;top:260.2px;line-height:13px;color:#333">critical</div>
<div class="a" style="left:217.0px;top:260.2px;line-height:13px;color:#333">node-serialize version 0.0.4 has 1 vulnerability.</div>
<div class="a" style="left:34.0px;top:284.7px;line-height:13px;color:#333">nodejs</div>
<div class="a" style="left:98.0px;top:286.7px;width:9px;height:9px;border-radius:50%;background:#e03a35"></div>
<div class="a" style="left:114.5px;top:284.7px;line-height:13px;color:#333">high</div>
<div class="a" style="left:217.0px;top:284.7px;line-height:13px;color:#333">node-jose version 0.3.1 has 1 vulnerability.</div>
<div class="a" style="left:34.0px;top:309.7px;line-height:13px;color:#333">nodejs</div>
<div class="a" style="left:98.0px;top:311.7px;width:9px;height:9px;border-radius:50%;background:#e03a35"></div>
<div class="a" style="left:114.5px;top:309.7px;line-height:13px;color:#333">high</div>
<div class="a" style="left:217.0px;top:309.7px;line-height:13px;color:#333">node-forge version 0.6.21-dev has 1 vulnerability.</div>
<svg class="a" style="left:20.80000000000001px;top:266.5px" width="5" height="4" viewBox="0 0 5 4"><path d="M0.6 0.8L2.5 2.8L4.4 0.8" fill="none" stroke="#666" stroke-width="1"/></svg>
<svg class="a" style="left:20.80000000000001px;top:291.0px" width="5" height="4" viewBox="0 0 5 4"><path d="M0.6 0.8L2.5 2.8L4.4 0.8" fill="none" stroke="#666" stroke-width="1"/></svg>
<svg class="a" style="left:20.80000000000001px;top:316.0px" width="5" height="4" viewBox="0 0 5 4"><path d="M0.6 2.8L2.5 0.8L4.4 2.8" fill="none" stroke="#666" stroke-width="1"/></svg>
<div class="a" style="left:114.2px;top:363.5px;line-height:13px;font-weight:bold;letter-spacing:-0.5px;color:#333;">Severity</div>
<div class="a" style="left:184.1px;top:363.5px;line-height:13px;font-weight:bold;letter-spacing:-0.5px;color:#333;">Package</div>
<div class="a" style="left:259.7px;top:363.5px;line-height:13px;font-weight:bold;letter-spacing:-0.5px;color:#333;">CVE</div>
<div class="a" style="left:340.3px;top:363.5px;line-height:13px;font-weight:bold;letter-spacing:-0.5px;color:#333;">Fix status</div>
<div class="a" style="left:403.4px;top:363.5px;line-height:13px;font-weight:bold;letter-spacing:-0.5px;color:#333;">Grace period</div>
<div class="a" style="left:466.5px;top:363.5px;line-height:13px;font-weight:bold;letter-spacing:-0.5px;color:#333;">Risk factors</div>
<div class="a" style="left:534.2px;top:363.5px;line-height:13px;font-weight:bold;letter-spacing:-0.5px;color:#333;">Description</div>
<div class="a" style="left:672.3px;top:363.5px;line-height:13px;font-weight:bold;letter-spacing:-0.5px;color:#333;">Tags</div>
<div class="a" style="left:114.0px;top:389.5px;width:8px;height:8px;border-radius:50%;background:#e03a35"></div>
<div class="a" style="left:130.5px;top:387.0px;line-height:13px;color:#333">high</div>
<div class="a" style="left:184.1px;top:387.0px;line-height:13px;color:#333">node-forge</div>
<div class="a" style="left:259.7px;top:387.0px;line-height:12.6px;color:#3a73b0">CVE-2020-<br>7720</div>
<div class="a" style="left:340.3px;top:387.0px;line-height:12.6px;color:#333">Fixed in:<br><b style="letter-spacing:-0.3px">0.10.0</b></div>
<div class="a" style="left:340.3px;top:415.5px;line-height:13.5px;color:#333">&gt;8 months<br>ago</div>
<div class="a" style="left:486.0px;top:386.5px;width:13px;height:13px;border-radius:50%;background:#d93a36;color:#fff;font-size:8px;font-weight:bold;line-height:13px;text-align:center;letter-spacing:0">5</div>
<div class="a" style="left:534.2px;top:386.5px;line-height:13px;color:#333">Impacted versions: &lt;0.10.0<br>Published: &gt;8 months ago</div>
<div class="a" style="left:534.2px;top:415.5px;line-height:13px;color:#333">The package node-forge<br>before 0.10.0 is vulnerable to<br>Prototype Pollution via the<br>util.setPath function. Note:<br>Version 0.10.0 is a breaking<br>change removing the</div>
<div class="a" style="left:672.0px;top:386.0px;width:93px;height:16px;background:#ebebeb"></div>
<div class="a" style="left:680.8px;top:387.5px;line-height:13px;color:#3a73b0">Add Tags to CVE</div>
<div class="a" style="left:806.5px;top:231.0px;width:11.5px;height:263px;background:#fafafa;border-left:1px solid #f0f0f0;border-right:1px solid #f0f0f0"></div>
<div class="a" style="left:810.0px;top:233.0px;width:6px;height:180px;border-radius:3px;background:#c2c2c2"></div>
<div class="a" style="left:0.0px;top:505.0px;width:830px;height:1px;background:#ebebeb"></div>
<div class="a" style="left:776.0px;top:516.0px;width:42px;height:23px;border:1px solid #d5d5d5;border-radius:3px;background:linear-gradient(#fff,#f0f0f0);color:#3a73b0;text-align:center;line-height:21px;font-size:10px;letter-spacing:-0.1px">Close</div>
</div>
<div class="a" style="left:1061.8px;top:646.6px;width:38px;height:38px;border-radius:50%;background:#3a84bd;z-index:6"></div>
<div class="a" style="left:1053px;top:644.9px;width:18.4px;height:18px;border-radius:50%;background:#3a84bd;z-index:6"></div>
<div class="a" style="left:1058px;top:648px;width:10px;text-align:center;color:#fff;font-size:9px;line-height:13px;z-index:7;letter-spacing:0">6</div>
<div class="a" style="left:1070.5px;top:652px;width:22px;text-align:center;color:#fff;font-size:27px;font-weight:bold;line-height:30px;z-index:7;letter-spacing:0">?</div>
</body></html>
